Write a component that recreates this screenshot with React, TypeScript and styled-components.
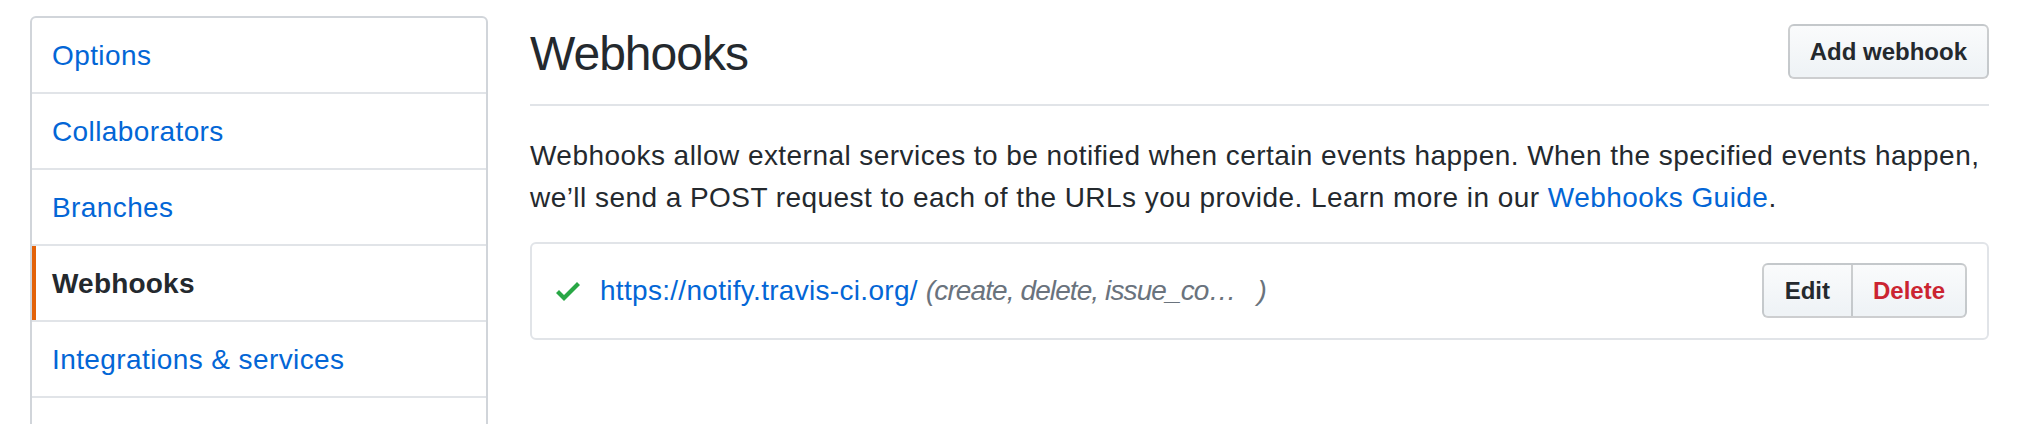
import styled, { createGlobalStyle, css } from "styled-components";

const GlobalStyle = createGlobalStyle`
  body {
    margin: 0;
    background: #fff;
    color: #24292e;
    font-family: "Liberation Sans", Arial, sans-serif;
    letter-spacing: 0.4px;
  }
`;

const Page = styled.div`
  display: flex;
  align-items: flex-start;
  gap: 42px;
  padding: 16px 51px 0 30px;
`;

const Menu = styled.nav`
  flex: 0 0 458px;
  box-sizing: border-box;
  border: 2px solid #d1d5da;
  border-radius: 6px;
  overflow: hidden;
`;

const MenuItem = styled.a<{ $selected?: boolean }>`
  display: block;
  padding: 18px 20px 16px;
  font-size: 28px;
  line-height: 40px;
  color: #0366d6;
  text-decoration: none;
  border-bottom: 2px solid #e1e4e8;
  ${(p) =>
    p.$selected &&
    css`
      color: #24292e;
      font-weight: 700;
      letter-spacing: 0.2px;
      box-shadow: inset 4px 0 0 #e36209;
    `}
`;

const Main = styled.main`
  flex: 1;
  min-width: 0;
`;

const Subhead = styled.div`
  display: flex;
  align-items: flex-start;
  justify-content: space-between;
  padding: 6px 0 20px;
  border-bottom: 2px solid #e1e4e8;
`;

const Heading = styled.h2`
  margin: 2px 0 0;
  font-size: 48px;
  line-height: 60px;
  font-weight: 400;
  letter-spacing: -1px;
`;

const Button = styled.button<{ $danger?: boolean }>`
  font-family: inherit;
  font-size: 24px;
  font-weight: 700;
  line-height: 39px;
  letter-spacing: normal;
  padding: 6px 20px;
  border: 2px solid rgba(27, 31, 35, 0.2);
  border-radius: 6px;
  background: linear-gradient(-180deg, #fafbfc 0%, #eff3f6 90%);
  color: ${(p) => (p.$danger ? "#cb2431" : "#24292e")};
  cursor: pointer;
`;

const HeadButton = styled(Button)`
  margin-top: 2px;
`;

const ButtonGroup = styled.div`
  display: flex;
  margin-left: auto;

  ${Button}:first-child {
    border-radius: 6px 0 0 6px;
    padding: 6px 21px;
  }
  ${Button}:last-child {
    border-left: 0;
    border-radius: 0 6px 6px 0;
  }
`;

const Lead = styled.p`
  margin: 29px 0 23px;
  font-size: 28px;
  line-height: 42px;
  letter-spacing: 0.45px;
  white-space: nowrap;
`;

const Link = styled.a`
  color: #0366d6;
  text-decoration: none;
`;

const HookBox = styled.div`
  border: 2px solid #e1e4e8;
  border-radius: 6px;
`;

const HookRow = styled.div`
  display: flex;
  align-items: center;
  padding: 19px 20px 20px 24px;
  font-size: 28px;
  letter-spacing: 0.3px;
`;

const CheckIcon = styled.svg`
  flex: none;
  fill: #28a745;
  margin-right: 20px;
`;

const Events = styled.span`
  margin-left: 8px;
  color: #6a737d;
  font-style: italic;
  letter-spacing: -0.9px;
`;

const Truncated = styled.span`
  margin-right: 22px;
`;

const items = ["Options", "Collaborators", "Branches", "Webhooks", "Integrations & services", "Deploy keys"];

export default function App() {
  return (
    <>
      <GlobalStyle />
      <Page>
        <Menu>
          {items.map((name) => (
            <MenuItem key={name} href="#" $selected={name === "Webhooks"}>
              {name}
            </MenuItem>
          ))}
        </Menu>
        <Main>
          <Subhead>
            <Heading>Webhooks</Heading>
            <HeadButton>Add webhook</HeadButton>
          </Subhead>
          <Lead>
            Webhooks allow external services to be notified when certain events happen. When the specified events happen,
            <br />
            we’ll send a POST request to each of the URLs you provide. Learn more in our <Link href="#">Webhooks Guide</Link>.
          </Lead>
          <HookBox>
            <HookRow>
              <CheckIcon width="24" height="32" viewBox="0 0 12 16">
                <path fillRule="evenodd" d="M12 5l-8 8-4-4 1.5-1.5L4 10l6.5-6.5L12 5z" />
              </CheckIcon>
              <Link href="#">https://notify.travis-ci.org/</Link>
              <Events>
                (<Truncated>create, delete, issue_co…</Truncated>)
              </Events>
              <ButtonGroup>
                <Button>Edit</Button>
                <Button $danger>Delete</Button>
              </ButtonGroup>
            </HookRow>
          </HookBox>
        </Main>
      </Page>
    </>
  );
}
